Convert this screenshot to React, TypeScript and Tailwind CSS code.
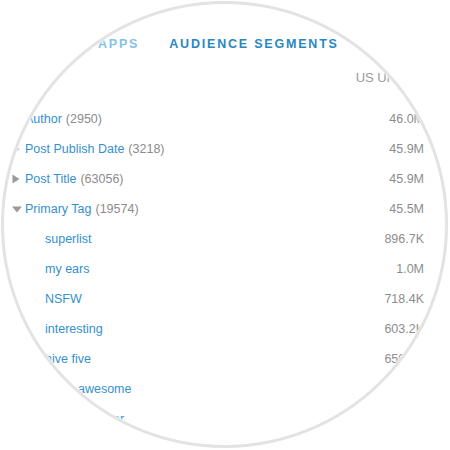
import React from "react";

type Row = {
  label: string;
  count?: string;
  value: string;
  arrow?: "right" | "down";
  child?: boolean;
};

const rows: Row[] = [
  { label: "Author", count: "(2950)", value: "46.0M", arrow: "right" },
  { label: "Post Publish Date", count: "(3218)", value: "45.9M", arrow: "right" },
  { label: "Post Title", count: "(63056)", value: "45.9M", arrow: "right" },
  { label: "Primary Tag", count: "(19574)", value: "45.5M", arrow: "down" },
  { label: "superlist", value: "896.7K", child: true },
  { label: "my ears", value: "1.0M", child: true },
  { label: "NSFW", value: "718.4K", child: true },
  { label: "interesting", value: "603.2K", child: true },
  { label: "hive five", value: "650.1K", child: true },
  { label: "that's awesome", value: "598.0K", child: true },
  { label: "master hacker", value: "512.3K", child: true },
];

function Arrow({ dir }: { dir: "right" | "down" }) {
  if (dir === "right") {
    return (
      <svg width="8" height="10" viewBox="0 0 8 10" className="block">
        <path d="M0.5 0.5 L7.5 5 L0.5 9.5 Z" fill="#9b9b9b" />
      </svg>
    );
  }
  return (
    <svg width="10" height="7" viewBox="0 0 10 7" className="block">
      <path d="M0 0.5 L10 0.5 L5 6.5 Z" fill="#9b9b9b" />
    </svg>
  );
}

export default function App() {
  return (
    <div
      className="relative w-[450px] h-[450px] bg-white overflow-hidden"
      style={{ fontFamily: '"Liberation Sans", Arial, sans-serif' }}
    >
      {/* tabs */}
      <div className="flex items-center pt-[36px] pl-[98px] gap-[30px] text-[12.5px] leading-[16px] font-bold tracking-[1.8px]">
        <span className="text-[#86c2e4]">APPS</span>
        <span className="text-[#2a87c2]">AUDIENCE SEGMENTS</span>
      </div>

      {/* header */}
      <div className="flex justify-end pr-[25px] mt-[16px] text-[13px] leading-[20px] text-[#9b9b9b]">
        US Uniques
      </div>

      {/* rows */}
      <div className="mt-[16px] flex flex-col">
        {rows.map((r) => (
          <div
            key={r.label}
            className="flex items-center justify-between h-[30px] pl-[12px] pr-[26px] text-[12.5px]"
          >
            <div className="flex items-center">
              <div className="w-[13px] flex items-center">
                {r.arrow ? <Arrow dir={r.arrow} /> : null}
              </div>
              <span className={r.child ? "pl-[20px] text-[#3590cf]" : "text-[#3590cf]"}>
                {r.label}
              </span>
              {r.count ? <span className="ml-[4px] text-[#8c8c8c]">{r.count}</span> : null}
            </div>
            <span className="text-[#8c8c8c]">{r.value}</span>
          </div>
        ))}
      </div>

      {/* circular mask */}
      <div
        className="absolute inset-0 pointer-events-none"
        style={{
          background:
            "radial-gradient(circle at 224.5px 224.5px, rgba(255,255,255,0) 219px, rgba(255,255,255,1) 221px)",
        }}
      />
      <div className="absolute left-[1px] top-[1px] w-[447px] h-[447px] rounded-full border-[3px] border-[#e3e3e3] pointer-events-none" />
    </div>
  );
}
